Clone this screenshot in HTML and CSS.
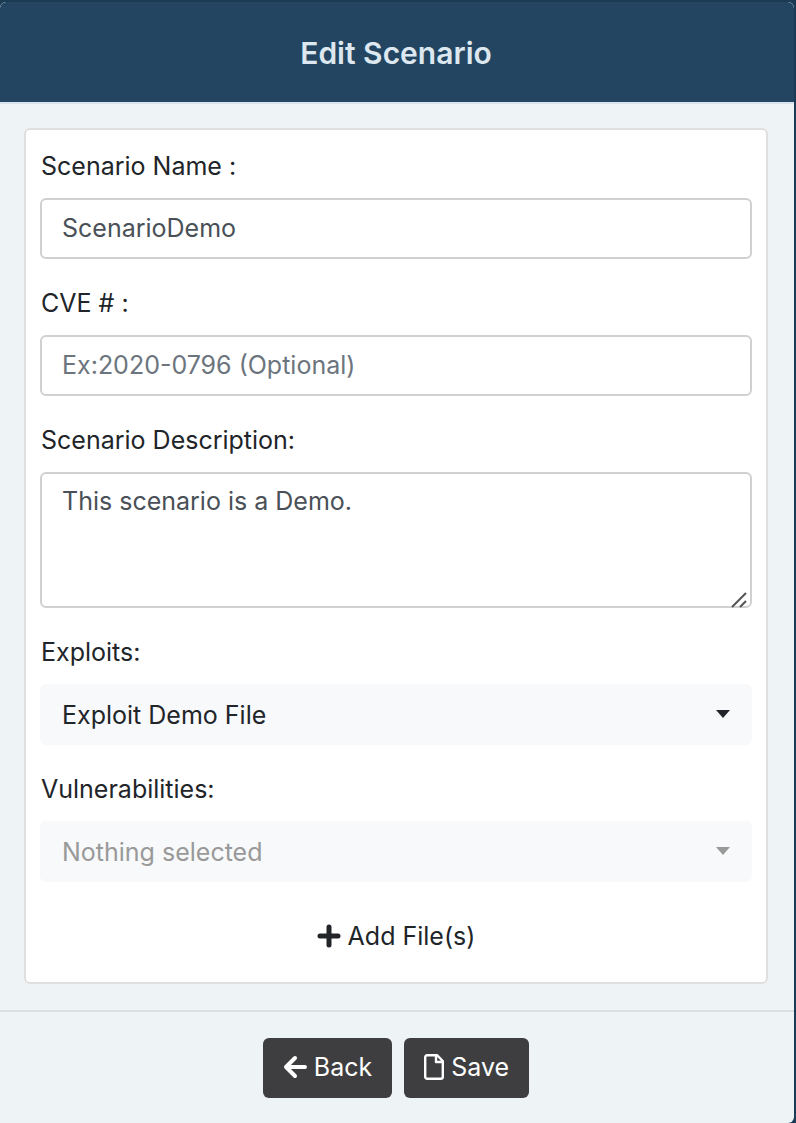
FILE: index.html
```html
<!DOCTYPE html>
<html lang="en">
<head>
<meta charset="utf-8">
<meta name="viewport" content="width=device-width, initial-scale=1">
<title>Edit Scenario</title>
<link rel="stylesheet" href="styles.css">
</head>
<body>
<form class="modal">
  <header class="modal-header">
    <h1 class="modal-title">Edit Scenario</h1>
  </header>
  <main class="modal-body">
    <div class="card">
      <div class="field">
        <label class="label" for="name">Scenario Name :</label>
        <input class="control" id="name" type="text" value="ScenarioDemo">
      </div>
      <div class="field">
        <label class="label" for="cve">CVE # :</label>
        <input class="control" id="cve" type="text" placeholder="Ex:2020-0796 (Optional)">
      </div>
      <div class="field">
        <label class="label" for="description">Scenario Description:</label>
        <div class="control-wrap">
          <textarea class="control control-area" id="description">This scenario is a Demo.</textarea>
          <svg class="grip" viewBox="0 0 18 18" aria-hidden="true"><path d="M2 17 16 3M10 17l6-6"/></svg>
        </div>
      </div>
      <div class="field">
        <label class="label" for="exploits">Exploits:</label>
        <div class="control-wrap">
          <select class="control control-select" id="exploits"><option>Exploit Demo File</option></select>
          <svg class="caret" viewBox="0 0 14 8" aria-hidden="true"><path d="M0 0h14L7 8z"/></svg>
        </div>
      </div>
      <div class="field">
        <label class="label" for="vulnerabilities">Vulnerabilities:</label>
        <div class="control-wrap is-empty">
          <select class="control control-select" id="vulnerabilities"><option>Nothing selected</option></select>
          <svg class="caret" viewBox="0 0 14 8" aria-hidden="true"><path d="M0 0h14L7 8z"/></svg>
        </div>
      </div>
      <button class="button button-add" type="button">
        <svg class="icon-plus" viewBox="0 0 24 24" aria-hidden="true"><path d="M12 3v18M3 12h18"/></svg>
        Add File(s)
      </button>
    </div>
  </main>
  <footer class="modal-footer">
    <button class="button button-dark" type="button">
      <svg class="icon-back" viewBox="0 0 24 24" aria-hidden="true"><path d="M12 3 3 12l9 9M3 12h19"/></svg>
      Back
    </button>
    <button class="button button-dark" type="submit">
      <svg class="icon-file" viewBox="0 0 20 26" aria-hidden="true"><path d="M3 1.2h10l5.8 5.8v15.8a2 2 0 0 1-2 2H3.200a2 2 0 0 1-2-2V3.200a2 2 0 0 1 2-2zM12 1.200v6.800h6.800"/></svg>
      Save
    </button>
  </footer>
</form>
</body>
</html>
```
FILE: styles.css
```css
* {
  box-sizing: border-box;
}

body {
  margin: 0;
  min-height: 100vh;
  padding: 2px 2px 0 0;
  background: #1b3a54;
  color: #212529;
  font: 25px/40px Inter, "Liberation Sans", sans-serif;
}

.modal {
  background: #eef3f6;
  border-radius: 6px 6px 6px 0;
  overflow: hidden;
}

.modal-header {
  padding: 31px 26px 29px 24px;
  background: #234561;
  border-bottom: 2px solid #d9e3ed;
  border-radius: 6px 6px 0 0;
  text-align: center;
}

.modal-title {
  margin: 0;
  color: #dce7ef;
  font-size: 30px;
  font-weight: 600;
  line-height: 40px;
}

.modal-body {
  padding: 24px 26px 26px 24px;
}

.card {
  display: flex;
  flex-direction: column;
  gap: 24px;
  padding: 16px 14px;
  background: #fff;
  border: 2px solid #dfdfe0;
  border-radius: 6px;
}

.field {
  display: flex;
  flex-direction: column;
  gap: 12px;
}

.label {
  padding-left: 1px;
}

.control-wrap {
  position: relative;
  display: flex;
}

.control {
  width: 100%;
  height: 61px;
  padding: 0 20px 2px;
  border: 2px solid #ced0d2;
  border-radius: 6px;
  background: #fff;
  color: #495057;
  font: inherit;
}

.control::placeholder {
  color: #6c757d;
  opacity: 1;
}

.control-area {
  height: 136px;
  padding: 7px 20px;
  resize: none;
}

.control-select {
  appearance: none;
  padding: 0 20px;
  border-color: #f8f9fa;
  background: #f8f9fa;
  color: #212529;
}

.is-empty .control-select {
  color: #999;
}

.caret {
  position: absolute;
  top: 26px;
  right: 22px;
  width: 14px;
  height: 8px;
  fill: #212529;
  pointer-events: none;
}

.is-empty .caret {
  fill: #999;
}

.grip {
  position: absolute;
  right: 4px;
  bottom: 0;
  width: 18px;
  height: 18px;
  fill: none;
  stroke: #555;
  stroke-width: 2;
  pointer-events: none;
}

.button {
  display: flex;
  align-items: center;
  justify-content: center;
  gap: 7px;
  height: 60px;
  padding: 0 20px;
  border: 0;
  border-radius: 6px;
  background: none;
  color: inherit;
  font: inherit;
  cursor: pointer;
}

.button-add {
  align-self: center;
}

.button-dark {
  padding: 0 20px 2px;
  background: #3e3e40;
  color: #fff;
}

.button svg {
  fill: none;
  stroke: currentColor;
  stroke-linecap: round;
  stroke-linejoin: round;
}

.icon-plus,
.icon-back {
  width: 24px;
  height: 24px;
}

.icon-plus {
  stroke-width: 5;
}

.icon-back {
  stroke-width: 4;
}

.icon-file {
  width: 20px;
  height: 26px;
  stroke-width: 2.4;
}

.modal-footer {
  display: flex;
  justify-content: center;
  gap: 12px;
  padding: 26px 26px 25px 24px;
  border-top: 2px solid #dcdfe1;
}
```
